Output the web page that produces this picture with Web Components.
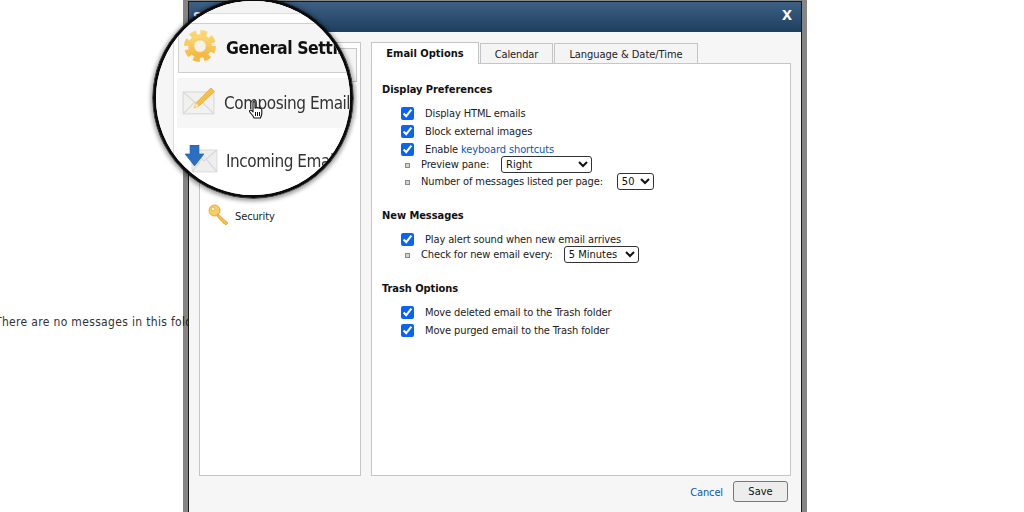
<!DOCTYPE html>
<html lang="en"><head><meta charset="utf-8"><title>Settings</title>
<style>
html,body{margin:0;height:100%;background:#fff;overflow:hidden}
body{font:11px "DejaVu Sans",sans-serif;color:#222}
</style></head><body>
<app-page></app-page>
<script>
const FONT='"DejaVu Sans",Verdana,sans-serif';
const ICONS={
gear:s=>`<svg width="${s}" height="${s}" viewBox="0 0 32 32"><defs><linearGradient id="g" x1="0" y1="0" x2="0" y2="1"><stop offset="0" stop-color="#fcd670"/><stop offset="1" stop-color="#f6b840"/></linearGradient></defs><circle cx="16" cy="16" r="13.500" fill="none" stroke="url(#g)" stroke-width="5" stroke-dasharray="6.600 4"/><circle cx="16" cy="16" r="9" fill="none" stroke="url(#g)" stroke-width="5.500"/><circle cx="16" cy="16" r="6.200" fill="#f5f2ea" stroke="#eeb648" stroke-width=".6"/></svg>`,
pencil:s=>`<svg width="${s}" height="${s*.82}" viewBox="0 0 34 28"><path d="M1 5h31v22H1z" fill="#f1f1ef" stroke="#d6d6d2"/><path d="M1 5l15 13L32 5M1 27l12-12M32 27L20 15" fill="none" stroke="#d8d8d4" stroke-width="1.200"/><path d="M12 21l2-5L29 1l3.500 3.500L17 19z" fill="#f5c04a" stroke="#e3a62f" stroke-width=".7"/><path d="M12 21l2-5 3 3z" fill="#fbe6b0"/></svg>`,
down:s=>`<svg width="${s}" height="${s*.82}" viewBox="0 0 34 28"><path d="M8 5h25v22H8z" fill="#eeeeee" stroke="#dadada"/><path d="M8 5l12 11L33 5M8 27l9-12M33 27L23 15" fill="none" stroke="#d8d8d8" stroke-width="1.200"/><path d="M6 0h9v9h5L10.500 21 1 9h5z" fill="#2a6fc4" stroke="#1f5cad" stroke-width=".6"/></svg>`,
key:s=>`<svg width="${s}" height="${s}" viewBox="0 0 22 22"><circle cx="6.500" cy="6.500" r="5.500" fill="#f6cd68" stroke="#e0a739"/><circle cx="5" cy="5" r="1.700" fill="#fff3cf" stroke="#e0a739" stroke-width=".6"/><path d="M10 10l10 9-2 2-2-1.500-1-.5-1-2-1.500-.5L9 12z" fill="#f2bd4e" stroke="#dd9f33" stroke-width=".7"/></svg>`,
hand:()=>`<svg width="14" height="18" viewBox="0 0 14 18"><path d="M4 1c1-.8 2 0 2 1v5l1 .1c.4-.8 1.600-.7 2 .1.500-.6 1.500-.5 2 .3.700-.3 1.800.2 1.800 1.200V13l-1.300 4H5l-1-2-3.200-4c-.8-1.400.8-2.500 1.900-1.400L4 10.800z" fill="#fff" stroke="#111" stroke-width="1.100" stroke-linejoin="round"/><path d="M6.500 11v4M8.500 11v4M10.500 11v4" stroke="#111"/></svg>`
};
function def(name,css,html,init){
  customElements.define(name,class extends HTMLElement{
    constructor(){super();const r=this.attachShadow({mode:'open'});
      r.innerHTML=`<style>${css}</style>${typeof html==='function'?html(this):html}`;}
    connectedCallback(){ if(init) init(this); }
  });
}
def('pref-check',`:host{display:flex;align-items:center;height:18px}
input{appearance:auto;accent-color:#0b63f6;width:13px;height:13px;margin:0 11px 0 0;flex:none}`,
`<input type="checkbox" checked><span><slot></slot></span>`);
def('pref-bullet',`:host{display:flex;align-items:center}
i{width:3px;height:3px;border:1px solid #8a8a8a;background:#d9d4c8;margin:1px 11px 0 4px;flex:none}`,
`<i></i><span><slot></slot></span><slot name="control"></slot>`);
def('pref-section',`:host{display:block}
h3{margin:0 0 7px;font:bold 11px ${FONT};font-stretch:condensed;letter-spacing:-.05px;color:#111;line-height:14px}
div{padding-left:19px}`,
`<h3></h3><div><slot></slot></div>`,el=>{el.shadowRoot.querySelector('h3').textContent=el.getAttribute('heading')});
def('tab-btn',`:host{display:block;box-sizing:border-box;height:20px;border:1px solid #c4c4c4;border-bottom:0;background:#f4f4f4;line-height:20px;text-align:center;margin-top:1px;margin-right:1px;padding-top:1px}
:host([active]){height:22px;margin-top:0;margin-bottom:-1px;background:#fff;font-weight:bold;letter-spacing:0;color:#111;position:relative;z-index:1;line-height:20px}`,`<slot></slot>`);
def('side-item',`:host{display:flex;align-items:center;gap:5px;height:34px;box-sizing:border-box;padding-left:5px;margin:0 3px}
:host([selected]){border:1px solid #c9c9c9;background:#f5f5f5}
:host([hover]){background:#f8f8f8}`,`<slot name="icon"></slot><span><slot></slot></span>`);
def('mag-row',`:host{display:flex;align-items:center;box-sizing:border-box;font:17px "DejaVu Sans",sans-serif;font-stretch:condensed;letter-spacing:-.45px;color:#333;white-space:nowrap;padding-left:6px;gap:8px;flex:none}
:host([selected]){height:50px;border:1px solid #cfcfcf;background:#f5f5f5;font-weight:bold;color:#111;font-size:17.500px;letter-spacing:-.45px;width:190px;overflow:hidden;gap:10px;padding-left:5px}
:host([hover]){height:50px;background:#f6f6f6;width:190px;margin-left:-1px;padding-left:5px}`,`<slot name="icon"></slot><slot></slot>`);
def('mag-lens',`:host{display:block;position:absolute;left:153px;top:-2px;width:200px;height:200px;border-radius:50%;z-index:5;box-shadow:0 0 0 .5px #000,0 1px 4px 2px rgba(0,0,0,.4)}
.in{position:absolute;inset:0;border-radius:50%;overflow:hidden;background:#fff;border:3px solid #0b0b0b;box-sizing:border-box}
.col{display:flex;flex-direction:column;height:100%;box-sizing:border-box;padding:22px 0 0 25px;gap:5px;margin-left:-3px;background:linear-gradient(90deg,#f6f6f6 0 20px,#ddd 20px 21px,#fff 21px);filter:blur(.35px)}
.top{position:absolute;left:0;right:0;top:0;height:12px;background:#f3f3f3;border-bottom:1px solid #ddd}
.cursor{position:absolute;left:93px;top:100px}`,
`<div class="in"><div class="col"><slot></slot></div><div class="top"></div><div class="cursor">${ICONS.hand()}</div></div>`);
def('settings-dialog',`:host{display:block;position:absolute;left:183px;top:-4px;width:624px;height:540px;box-sizing:border-box;border:5px solid rgba(0,0,0,.48);z-index:2}
.frame{height:100%;box-sizing:border-box;border:1px solid #1a1a1a;border-bottom:0;background:#f6f6f6;display:flex;flex-direction:column}
.title{height:30px;flex:none;background:linear-gradient(#3c5f83,#1f3f5f);color:#fff;display:flex;align-items:center;justify-content:space-between;padding:0 9px 0 4px;font:bold 12px ${FONT}}
.x{font:bold 18px "Liberation Sans",sans-serif;line-height:1;position:relative;top:-3px}
.body{flex:none;display:flex;gap:10px;padding:10px 10px 0 10px}
.left{box-sizing:border-box;width:162px;height:434px;border:1px solid #c6c6c6;background:#fff;padding:5px 0 0;display:flex;flex-direction:column;gap:3px}
.right{width:420px;display:flex;flex-direction:column}
.tabs{display:flex;padding-left:0;height:21px}
.pane{box-sizing:border-box;height:413px;border:1px solid #c6c6c6;background:#fff;padding:19px 10px}
.foot{display:flex;justify-content:flex-end;align-items:center;gap:10px;padding:5px 13px 0 0}
.foot a{color:#0b57b5;text-decoration:none;position:relative;top:1px}
button{box-sizing:border-box;width:55px;height:21px;border:1px solid #787878;border-radius:3px;background:#ededed;font:11px ${FONT};font-stretch:condensed;color:#111;padding:0}
`,
`<div class="frame"><div class="title"><span>Settings</span><span class="x">x</span></div>
<div class="body"><div class="left"><slot name="side"></slot></div><div class="right"><div class="tabs"><slot name="tabs"></slot></div><div class="pane"><slot></slot></div></div></div>
<div class="foot"><a href="#">Cancel</a><button>Save</button></div></div>`);
def('app-page',`:host{display:block;position:relative;width:1024px;height:512px;overflow:hidden;font:11px ${FONT};font-stretch:condensed;letter-spacing:-.12px;color:#222}
.msg{padding:315px 0 0 0;margin-left:-5px;font-size:12px;letter-spacing:.33px;white-space:nowrap;color:#333;line-height:14px}
a{color:#0b57b5;text-decoration:none}
select{font:11px ${FONT};font-stretch:condensed;height:17px;padding:0;color:#111;background:#fff;border:1px solid #333;border-radius:3px}
.a{margin-bottom:17px}.b{margin-bottom:21px}`,
`<div class="msg">There are no messages in this folder</div>
<settings-dialog>
 <side-item slot="side" selected></side-item>
 <side-item slot="side" hover style="margin-bottom:77px"></side-item>
 <side-item slot="side"><span slot="icon">${ICONS.key(22)}</span>Security</side-item>
 <tab-btn slot="tabs" active style="width:108px">Email Options</tab-btn>
 <tab-btn slot="tabs" style="width:73px">Calendar</tab-btn>
 <tab-btn slot="tabs" style="width:144px;letter-spacing:-.04px">Language &amp; Date/Time</tab-btn>
 <pref-section class="a" heading="Display Preferences">
  <pref-check>Display HTML emails</pref-check>
  <pref-check>Block external images</pref-check>
  <pref-check>Enable&nbsp;<a href="#">keyboard shortcuts</a></pref-check>
  <pref-bullet style="height:13px">Preview pane:<select slot="control" style="width:91px;margin-left:12px"><option>Right</option></select></pref-bullet>
  <pref-bullet style="height:21px">Number of messages listed per page:<select slot="control" style="width:37px;margin-left:14px"><option>50</option></select></pref-bullet>
 </pref-section>
 <pref-section class="b" heading="New Messages">
  <pref-check>Play alert sound when new email arrives</pref-check>
  <pref-bullet style="height:13px">Check for new email every:<select slot="control" style="width:75px;margin-left:11px"><option>5 Minutes</option></select></pref-bullet>
 </pref-section>
 <pref-section heading="Trash Options">
  <pref-check>Move deleted email to the Trash folder</pref-check>
  <pref-check>Move purged email to the Trash folder</pref-check>
 </pref-section>
</settings-dialog>
<mag-lens>
 <mag-row selected><span slot="icon">${ICONS.gear(32)}</span>General Settings</mag-row>
 <mag-row hover><span slot="icon">${ICONS.pencil(34)}</span>Composing Email</mag-row>
 <mag-row style="height:50px;margin-top:3px"><span slot="icon">${ICONS.down(34)}</span>Incoming Email</mag-row>
</mag-lens>`);
</script>
</body></html>
